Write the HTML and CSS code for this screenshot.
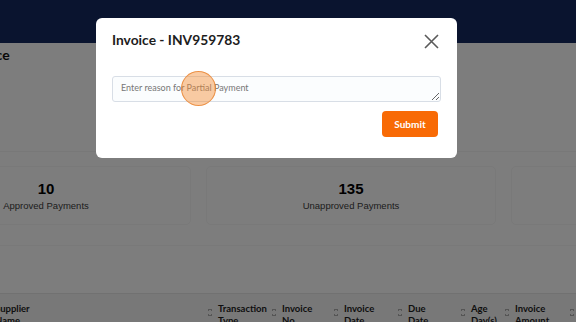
FILE: index.html
```html
<!DOCTYPE html>
<html lang="en">
<head>
    <meta charset="UTF-8">
    <meta name="viewport" content="width=device-width, initial-scale=1.0">
    <title>Invoices</title>
    <link rel="stylesheet" href="styles.css">
</head>
<body>
    <div class="topbar"></div>

    <div class="page">
        <div class="toolbar">
            <h2 class="page-title">Invoice</h2>
        </div>

        <div class="cards">
            <div class="card">
                <div class="card-value">10</div>
                <div class="card-label">Approved Payments</div>
            </div>
            <div class="card">
                <div class="card-value">135</div>
                <div class="card-label">Unapproved Payments</div>
            </div>
            <div class="card">
                <div class="card-value"></div>
                <div class="card-label"></div>
            </div>
        </div>

        <div class="table-box">
            <div class="table-tools"></div>
            <div class="table-head">
                <div class="th th-supplier"><span>Supplier<br>Name</span><i class="sort"></i></div>
                <div class="th"><span>Transaction<br>Type</span><i class="sort"></i></div>
                <div class="th"><span>Invoice<br>No</span><i class="sort"></i></div>
                <div class="th"><span>Invoice<br>Date</span><i class="sort"></i></div>
                <div class="th"><span>Due<br>Date</span><i class="sort"></i></div>
                <div class="th"><span>Age<br>Day(s)</span><i class="sort"></i></div>
                <div class="th"><span>Invoice<br>Amount</span><i class="sort"></i></div>
            </div>
        </div>
    </div>

    <div class="overlay"></div>

    <div class="modal">
        <div class="modal-header">
            <h3>Invoice - INV959783</h3>
            <button class="close" aria-label="Close">
                <svg width="15" height="15" viewBox="0 0 15 15">
                    <path d="M1 1 L14 14 M14 1 L1 14" stroke="#5a5a5a" stroke-width="1.6" fill="none"/>
                </svg>
            </button>
        </div>
        <textarea class="reason" placeholder="Enter reason for Partial Payment"></textarea>
        <div class="modal-footer">
            <button class="submit">Submit</button>
        </div>
    </div>

    <div class="click-dot"></div>
</body>
</html>
```

FILE: styles.css
```css
body {
    margin: 0;
    background: #fbfbfb;
    font-family: Lato, "Liberation Sans", sans-serif;
    color: #111;
    overflow: hidden;
    height: 322px;
}
.topbar {
    height: 43px;
    background: #15295e;
}
.page {
    margin-left: -99px;
    width: 900px;
}
.toolbar {
    box-sizing: border-box;
    height: 109px;
    padding: 5px 0 0 64px;
    border-bottom: 1px solid #f1f1f1;
}
.page-title {
    margin: 0;
    font-size: 14px;
    font-weight: 700;
    line-height: 14px;
    color: #111;
}
.cards {
    display: flex;
    gap: 15px;
    margin-top: 14px;
}
.card {
    width: 290px;
    height: 57px;
    border: 1px solid #f3f3f3;
    border-radius: 5px;
    text-align: center;
    font-family: "Liberation Sans", Arial, sans-serif;
}
.card-value {
    margin-top: 13px;
    font-size: 15px;
    font-weight: 700;
    line-height: 17px;
    color: #000;
}
.card-label {
    margin-top: 3px;
    font-size: 9.5px;
    color: #3a3a3a;
}
.table-box {
    margin-top: 20px;
    border-top: 1px solid #f2f2f2;
}
.table-tools {
    height: 47px;
}
.table-head {
    display: grid;
    grid-template-columns: 223px 64px 62px 64px 63px 44px 65px;
    padding-left: 94px;
    background: #f0f0f0;
    border-top: 1px solid #e2e2e2;
    height: 40px;
}
.th {
    display: flex;
    justify-content: space-between;
    align-items: flex-start;
    padding: 9px 6px 0 0;
    font-size: 9.5px;
    font-weight: 700;
    line-height: 12px;
    color: #1e1e1e;
}
.sort {
    width: 4px;
    height: 7px;
    margin-top: 6px;
    background:
        linear-gradient(to top left, transparent 50%, #aaa 50%) left top / 2px 3px no-repeat,
        linear-gradient(to top right, transparent 50%, #aaa 50%) right top / 2px 3px no-repeat,
        linear-gradient(to bottom left, transparent 50%, #aaa 50%) left bottom / 2px 3px no-repeat,
        linear-gradient(to bottom right, transparent 50%, #aaa 50%) right bottom / 2px 3px no-repeat;
}
.overlay {
    position: fixed;
    inset: 0;
    background: rgba(0, 0, 0, 0.5);
}
.modal {
    position: fixed;
    left: 96px;
    top: 18px;
    width: 329px;
    height: 140px;
    padding: 0 16px;
    background: #fff;
    border-radius: 6px;
}
.modal-header {
    display: flex;
    justify-content: space-between;
    align-items: center;
    height: 46px;
}
.modal-header h3 {
    margin: 0 0 3px;
    font-size: 13.8px;
    font-weight: 700;
    color: #1d1d1d;
}
.close {
    border: 0;
    background: none;
    padding: 0;
    margin-right: 2px;
    display: flex;
}
.reason {
    display: block;
    box-sizing: border-box;
    width: 329px;
    height: 26px;
    margin-top: 12px;
    padding: 5px 8px;
    border: 1px solid #d8dee6;
    border-radius: 3px;
    background: #fbfdfe;
    font-family: Lato, "Liberation Sans", sans-serif;
    font-size: 9px;
}
.reason::placeholder {
    color: #777;
}
.modal-footer {
    display: flex;
    justify-content: flex-end;
    margin-top: 9px;
    padding-right: 3px;
}
.submit {
    width: 56px;
    height: 26px;
    border: 0;
    border-radius: 4px;
    background: #f86a05;
    color: #fff;
    font-family: Lato, "Liberation Sans", sans-serif;
    font-size: 10px;
    font-weight: 700;
}
.click-dot {
    position: fixed;
    left: 181px;
    top: 71px;
    width: 33px;
    height: 33px;
    border-radius: 50%;
    background: rgba(244, 140, 50, 0.45);
    border: 1px solid rgba(232, 130, 45, 0.8);
}
```
